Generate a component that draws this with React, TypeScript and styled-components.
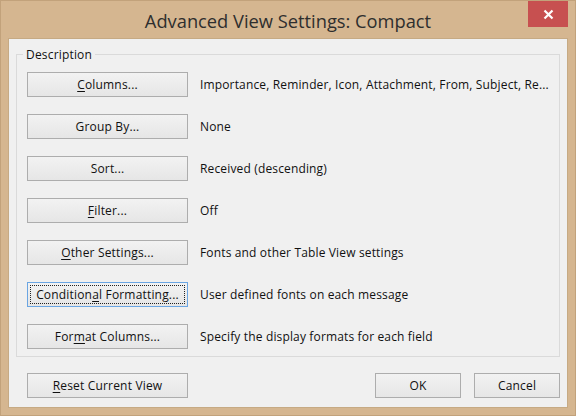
import React from "react";
import styled, { createGlobalStyle } from "styled-components";

const Global = createGlobalStyle`
  html, body { margin: 0; padding: 0; background: #d5b690; }
  body { font-family: "Open Sans", "Noto Sans", "Liberation Sans", sans-serif; }
`;

const Window = styled.div`
  box-sizing: border-box;
  width: 576px;
  height: 416px;
  background: #d5b690;
  border: 1px solid #c2a27b;
  padding: 0 7px 7px;
  display: flex;
  flex-direction: column;
`;

const TitleBar = styled.div`
  height: 37px;
  display: grid;
  grid-template-columns: 1fr auto 1fr;
  align-items: start;
`;

const Title = styled.div`
  grid-column: 2;
  align-self: center;
  font-size: 18.3px;
  color: #2e2e2e;
  white-space: nowrap;
  margin-top: 1px;
`;

const CloseButton = styled.div`
  grid-column: 3;
  justify-self: end;
  width: 40px;
  height: 26px;
  background: #c75050;
  display: flex;
  align-items: center;
  justify-content: center;
`;

const Panel = styled.div`
  flex: 1;
  box-sizing: border-box;
  background: #f0f0f0;
  border: 1px solid #c6aa84;
  padding: 15px 7px 8px;
  display: flex;
  flex-direction: column;
  font-size: 12px;
  letter-spacing: 0.18px;
  color: #111;
`;

const Group = styled.div`
  position: relative;
  border: 1px solid #dadada;
  padding: 17px 10px 7px;
  display: flex;
  flex-direction: column;
  gap: 17px;
`;

const Legend = styled.div`
  position: absolute;
  top: -8px;
  left: 6px;
  padding: 0 3px;
  background: #f0f0f0;
  line-height: 16px;
`;

const Row = styled.div`
  display: grid;
  grid-template-columns: 161px 1fr;
  column-gap: 12px;
  align-items: center;
`;

const Button = styled.div<{ $focused?: boolean; $width?: number }>`
  position: relative;
  box-sizing: border-box;
  width: ${(p) => p.$width ?? 161}px;
  height: 25px;
  border: 1px solid ${(p) => (p.$focused ? "#6aa5e2" : "#adadad")};
  background: linear-gradient(#f2f2f2, #e6e6e6);
  display: flex;
  align-items: center;
  justify-content: center;
  white-space: nowrap;
  ${(p) =>
    p.$focused
      ? `&::after { content: ""; position: absolute; inset: 2px; border: 1px dotted #222; }`
      : ""}
`;

const U = styled.span`
  text-decoration: underline;
  text-underline-offset: 2px;
`;

const Desc = styled.div`
  white-space: nowrap;
  letter-spacing: 0.15px;
`;

const Footer = styled.div`
  margin-top: 16px;
  padding-left: 11px;
  display: flex;
  align-items: center;
`;

const Spacer = styled.div`
  flex: 1;
`;

const FooterRight = styled.div`
  display: flex;
  gap: 13px;
`;

const rows: { label: React.ReactNode; desc: string; focused?: boolean }[] = [
  { label: <><U>C</U>olumns...</>, desc: "Importance, Reminder, Icon, Attachment, From, Subject, Re..." },
  { label: <>Group By...</>, desc: "None" },
  { label: <>Sort...</>, desc: "Received (descending)" },
  { label: <><U>F</U>ilter...</>, desc: "Off" },
  { label: <><U>O</U>ther Settings...</>, desc: "Fonts and other Table View settings" },
  { label: <>Condition<U>a</U>l Formatting...</>, desc: "User defined fonts on each message", focused: true },
  { label: <>For<U>m</U>at Columns...</>, desc: "Specify the display formats for each field" },
];

export default function App() {
  return (
    <>
      <Global />
      <Window>
        <TitleBar>
          <Title>Advanced View Settings: Compact</Title>
          <CloseButton>
            <svg width="11" height="11" viewBox="0 0 11 11">
              <path d="M1.5 1.5 L9.5 9.5 M9.5 1.5 L1.5 9.5" stroke="#fff" strokeWidth="2.2" />
            </svg>
          </CloseButton>
        </TitleBar>
        <Panel>
          <Group>
            <Legend>Description</Legend>
            {rows.map((r, i) => (
              <Row key={i}>
                <Button $focused={r.focused}>{r.label}</Button>
                <Desc>{r.desc}</Desc>
              </Row>
            ))}
          </Group>
          <Footer>
            <Button>
              <U>R</U>eset Current View
            </Button>
            <Spacer />
            <FooterRight>
              <Button $width={86}>OK</Button>
              <Button $width={86}>Cancel</Button>
            </FooterRight>
          </Footer>
        </Panel>
      </Window>
    </>
  );
}
